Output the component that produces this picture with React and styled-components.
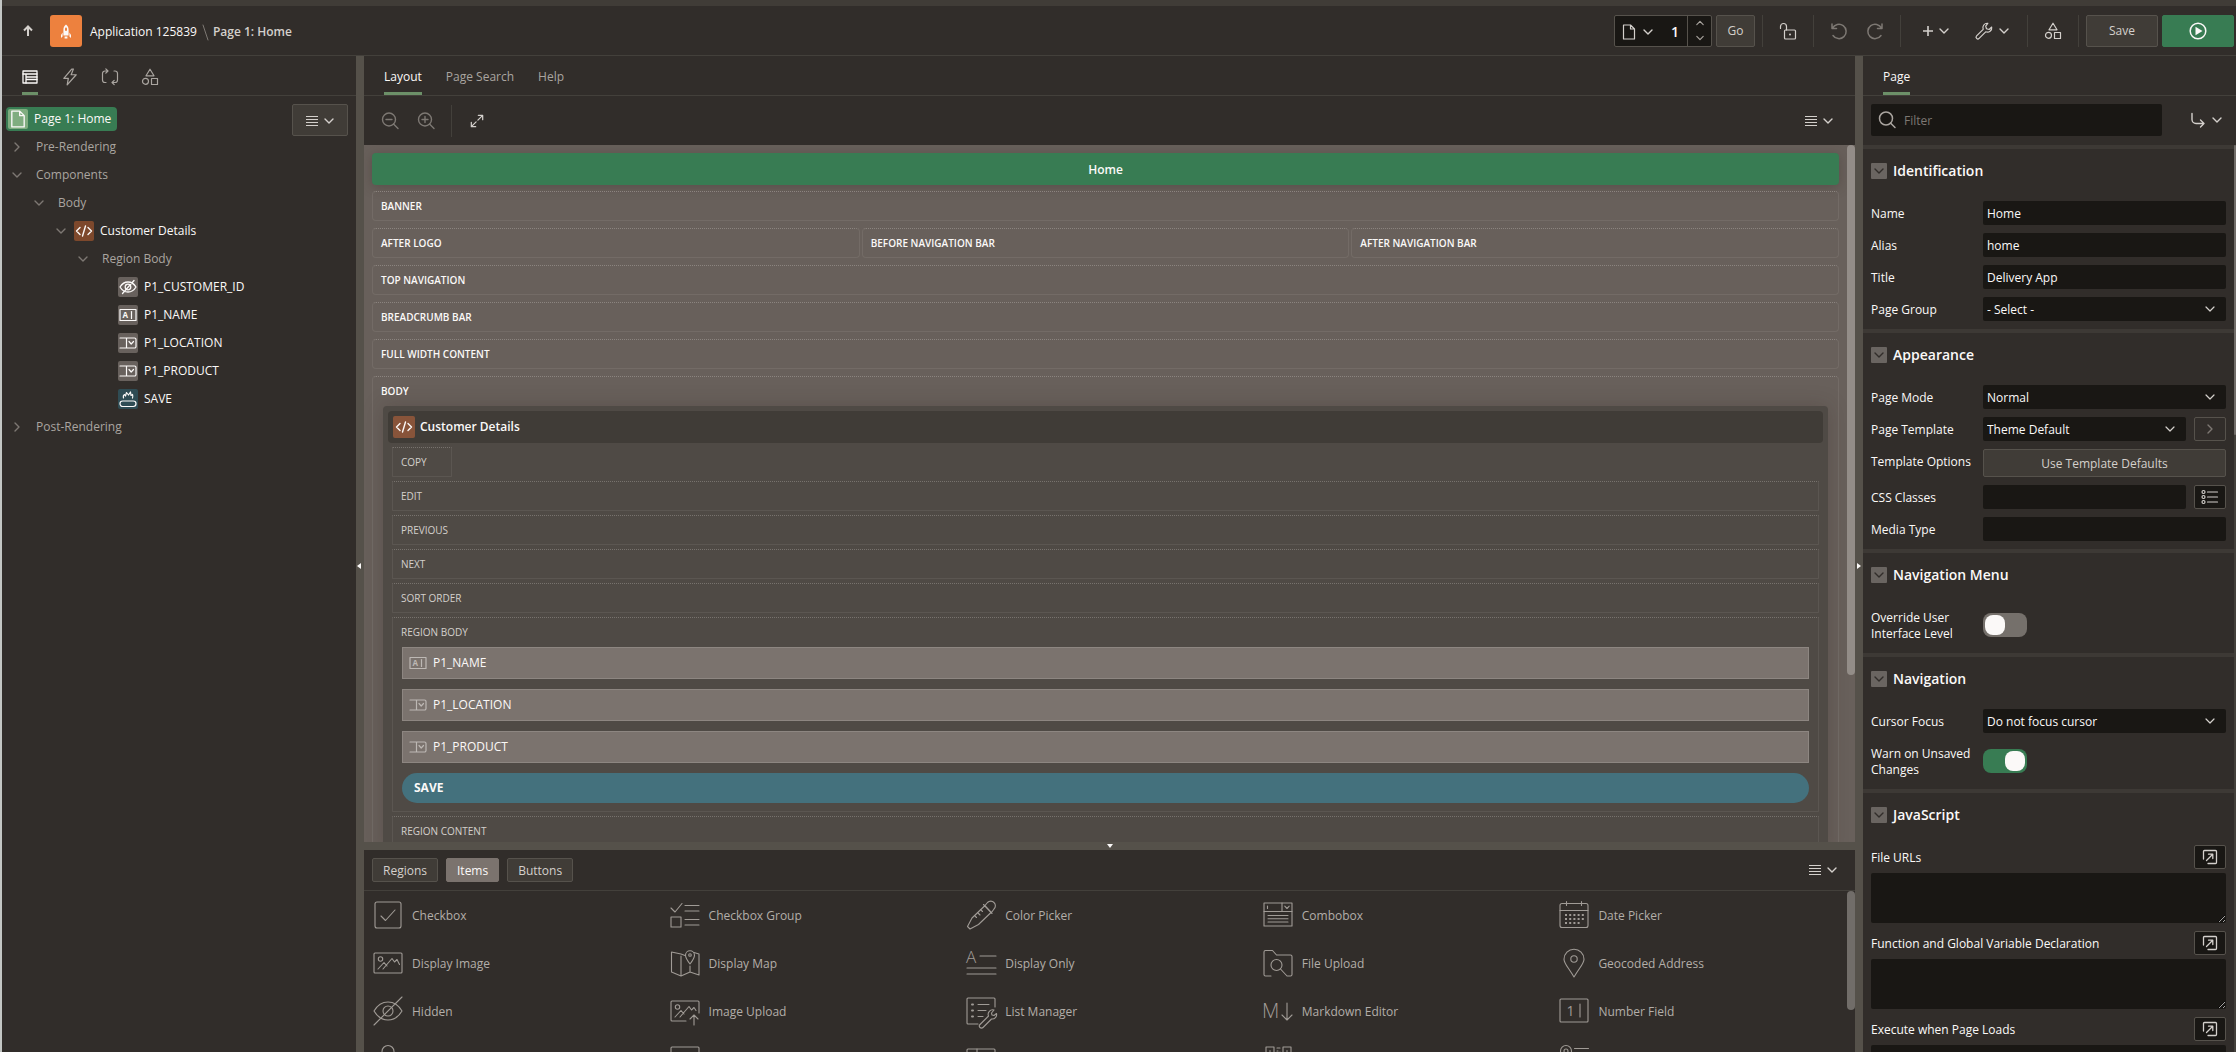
import React, { useState } from 'react'
import styled, { createGlobalStyle } from 'styled-components'

const colours = {
    panel: '#312d2a',
    chrome: '#403c37',
    line: '#43403b',
    splitter: '#55514a',
    buttonBorder: '#56524c',
    field: '#191714',
    canvas: '#68605b',
    region: '#4f4a45',
    regionTitle: '#403c37',
    item: '#7b736e',
    green: '#387c53',
    accent: '#6c9068',
    teal: '#44717d',
    text: '#fbf9f8',
    soft: '#d4d0cc',
    muted: '#aaa5a0',
    dim: '#7d7873',
}

const GlobalStyle = createGlobalStyle`
    * {
        box-sizing: border-box;
    }

    body {
        margin: 0;
        background-color: ${colours.panel};
        color: ${colours.text};
        font-family: "Open Sans", "Noto Sans", sans-serif;
        font-size: 12px;
        line-height: 16px;
    }

    button, input, select, textarea {
        font: inherit;
        color: inherit;
    }

    button {
        cursor: pointer;
    }
`

/* ---------- icons ---------- */

const Glyph = styled.svg`
    display: block;
    flex: none;
    overflow: visible;
    fill: none;
    stroke: currentColor;
    stroke-linecap: round;
    stroke-linejoin: round;
    stroke-width: ${props => props.$stroke || 1};

    text {
        fill: currentColor;
        stroke: none;
        font-family: "Open Sans", sans-serif;
    }

    .solid {
        fill: currentColor;
        stroke: none;
    }
`

const Icon = ({ size = 16, box = size, stroke, children }) => (
    <Glyph width={size} height={size} viewBox={`0 0 ${box} ${box}`} $stroke={stroke} aria-hidden="true">
        {children}
    </Glyph>
)

const ChevronDown = ({ size = 10, stroke = 1.4 }) => (
    <Icon size={size} box={10} stroke={stroke}><path d="M1 3l4 4 4-4" /></Icon>
)

const ChevronRight = ({ size = 10, stroke = 1.4 }) => (
    <Icon size={size} box={10} stroke={stroke}><path d="M3 1l4 4-4 4" /></Icon>
)

const MenuIcon = () => (
    <Icon size={12} stroke={1.1}><path d="M0 1.5h12M0 4.5h12M0 7.500h12M0 10.500h12" strokeLinecap="butt" /></Icon>
)

const ArrowUpIcon = () => (
    <Icon size={12} stroke={2}><path d="M6 11V2M2 5.500l4-4 4 4" strokeLinecap="butt" strokeLinejoin="miter" /></Icon>
)

const RocketIcon = () => (
    <Icon size={16}>
        <path className="solid" d="M8 1.500c-2 1.400-2.600 3.400-2.600 5.500v5.500h5.200V7c0-2.100-.600-4.100-2.600-5.500zM4.600 9.500L3 12v3l1.600-1.500zM11.400 9.500L13 12v3l-1.600-1.500zM6.600 13.500h2.800v2H6.600z" />
        <rect x="7" y="4.500" width="2" height="3.500" rx="1" fill="#ed813e" stroke="none" />
    </Icon>
)

const SlashIcon = () => (
    <Icon size={16}><path d="M6 1l5 15" /></Icon>
)

const RenderingIcon = () => (
    <Icon size={16} stroke={1.3}>
        <rect x="1" y="2" width="14" height="12" />
        <path d="M1 5h14M4 5v9M4 8h11M4 10.500h11" />
    </Icon>
)

const BoltIcon = () => (
    <Icon size={18} box={16} stroke={1.1}><path d="M9.500 1L2.500 9.200h4L5.500 15l8-9h-4.500l2-5z" /></Icon>
)

const ProcessIcon = () => (
    <Icon size={18} stroke={1.2}>
        <path d="M7 3H4a2.500 2.500 0 0 0-2.500 2.500V12A2.500 2.500 0 0 0 4 14.500h1M4.800.800L7 3 4.800 5.200M11 14.500h3a2.500 2.500 0 0 0 2.500-2.500V5.500A2.500 2.500 0 0 0 14 3h-1M13.200 12.300L11 14.500l2.200 2.200" />
    </Icon>
)

const ShapesIcon = () => (
    <Icon size={18} stroke={1.2}>
        <path d="M9 1.200l4 6.600H5z" />
        <circle cx="4.500" cy="13.300" r="3" />
        <rect x="10.500" y="10.500" width="6" height="6" />
    </Icon>
)

const PageIcon = ({ size = 16 }) => (
    <Icon size={size} box={16} stroke={1.2}>
        <path d="M2.500 1h7l4 4v10h-11zM9.500 1v4h4" />
    </Icon>
)

const UnlockIcon = () => (
    <Icon size={18} stroke={1.2}>
        <rect x="5.500" y="8" width="11" height="9" rx="1" />
        <path d="M1.500 6.500V4.500a3 3 0 0 1 6 0V8" />
        <circle className="solid" cx="11" cy="12.500" r="1" />
    </Icon>
)

const UndoIcon = () => (
    <Icon size={18} stroke={1.5}>
        <path d="M2 2v4.500h4.500M2.500 6.200A7.200 7.200 0 1 1 3 13.500" />
    </Icon>
)

const RedoIcon = () => (
    <Icon size={18} stroke={1.5}>
        <path d="M16 2v4.500h-4.500M15.500 6.200A7.200 7.200 0 1 0 15 13.500" />
    </Icon>
)

const PlusIcon = () => (
    <Icon size={10} stroke={1.6}><path d="M5 0v10M0 5h10" strokeLinecap="butt" /></Icon>
)

const WrenchIcon = () => (
    <Icon size={18} stroke={1.2}>
        <path d="M12.800 1.300a4.400 4.400 0 0 0-4.600 6L1.600 13.900a1.700 1.700 0 0 0 2.500 2.500l6.600-6.600a4.400 4.400 0 0 0 6-4.800l-2.600 2.500-2.600-.800-.800-2.600z" />
    </Icon>
)

const RunIcon = () => (
    <Icon size={18} stroke={1.5}>
        <circle cx="9" cy="9" r="7.800" />
        <path className="solid" d="M6.500 4.800v8.400L13.500 9z" />
    </Icon>
)

const ZoomOutIcon = () => (
    <Icon size={18} stroke={1.4}>
        <circle cx="8" cy="7.500" r="6.500" /><path d="M12.500 12l4.500 4.500M5 7.500h6" />
    </Icon>
)

const ZoomInIcon = () => (
    <Icon size={18} stroke={1.4}>
        <circle cx="8" cy="7.500" r="6.500" /><path d="M12.500 12l4.500 4.500M5 7.500h6M8 4.500v6" />
    </Icon>
)

const ExpandIcon = () => (
    <Icon size={14} box={16} stroke={1.4}>
        <path d="M9.500 1.500h5v5M14.500 1.500L9 7M6.500 14.500h-5v-5M1.500 14.500L7 9" />
    </Icon>
)

const SearchIcon = () => (
    <Icon size={18} stroke={1.5}>
        <circle cx="8" cy="7.500" r="6.500" /><path d="M12.500 12l4.500 4.500" />
    </Icon>
)

const GotoIcon = () => (
    <Icon size={16} stroke={1.4}>
        <path d="M2 1.500v6a4 4 0 0 0 4 4h8M10.500 8l3.500 3.500-3.500 3.500" />
    </Icon>
)

const CodeIcon = () => (
    <Icon size={18} stroke={1.4}>
        <path d="M5 5.500L1.500 9 5 12.500M13 5.500L16.500 9 13 12.500M10.500 4l-3 10" />
    </Icon>
)

const HiddenIcon = () => (
    <Icon size={18} stroke={1.3}>
        <path d="M1 9c2-3.300 4.800-5 8-5s6 1.700 8 5c-2 3.300-4.800 5-8 5s-6-1.700-8-5zM15 2.500L3.500 15.500" />
        <circle cx="9" cy="9" r="2.800" />
    </Icon>
)

const TextFieldIcon = () => (
    <Icon size={18} stroke={1.2}>
        <rect x="1" y="3.500" width="16" height="11" />
        <text x="3.500" y="12" fontSize="8" fontWeight="700">A</text>
        <path d="M12.500 5.500v7" />
    </Icon>
)

const SelectListIcon = () => (
    <Icon size={18} stroke={1.2}>
        <path d="M1 4h14.500a1.500 1.500 0 0 1 1.500 1.500v7a1.500 1.500 0 0 1-1.500 1.500H1M7.500 4v10M10 7.500l2.200 2.500 2.300-2.500" />
    </Icon>
)

const ButtonIcon = () => (
    <Icon size={18} stroke={1.2}>
        <rect x="1" y="11" width="16" height="5.500" rx="2.700" />
        <path d="M4.500 8c-.500-2 0-3 1-3.500L6.500 6l1-3.500L9.500 5l2-3 .500 3.500 1.500-1c.500 1.500.500 2.500 0 3.500" />
    </Icon>
)

const ListIcon = () => (
    <Icon size={18} stroke={1.2}>
        <circle cx="2.500" cy="4" r="1.500" /><circle cx="2.500" cy="9" r="1.500" /><circle cx="2.500" cy="14" r="1.500" />
        <path d="M6.500 4h10M6.500 9h10M6.500 14h10" />
    </Icon>
)

const PopupIcon = () => (
    <Icon size={16} stroke={1.3}>
        <path d="M1.500 10V2.500a1 1 0 0 1 1-1h11a1 1 0 0 1 1 1v11a1 1 0 0 1-1 1H6M4.500 11.500l6-6M6.500 5.200h4.300v4.300" />
    </Icon>
)

/* Item gallery drawings, all on a 32 unit grid */
const drawings = {
    checkbox: <><rect x="3" y="3" width="26" height="26" rx="2" /><path d="M9 17l4.500 4.500L23 11" /></>,
    checkboxGroup: <><path d="M2 9l4 4 7-8.500M16 6.500h14M16 12h14M16 20.500h14M16 26h14" /><rect x="2" y="18" width="10" height="10" /></>,
    colorPicker: <>
        <path d="M20 6.500l2.500-3a4.500 4.500 0 0 1 6.500 0 4.500 4.500 0 0 1 0 6.500l-2.500 3.500zM18.500 5.500l8.500 9M19 7.500L7 19 2.500 27.500 5 30l8.500-4.500L25.500 14" />
        <path d="M15.500 10.500l2 2M12.500 13.500l2.500 2.500M9.500 16.500l2 2" />
    </>,
    combobox: <>
        <rect x="2" y="4" width="28" height="23" />
        <path d="M2 12.500h28M20 4v8.500M22.800 7.200l2.200 2.300 2.200-2.300M5.500 7v2.500M6 16.500h20M6 19.800h20M6 23h20" />
    </>,
    datePicker: <>
        <rect x="2" y="4.500" width="28" height="24" rx="2" />
        <path d="M2 11.500h28M8.500 2.500v4M23.500 2.500v4" />
        <path d="M7 16h19M7 20h19M7 24h15" strokeDasharray="2 2.200" strokeWidth="2" strokeLinecap="butt" />
    </>,
    displayImage: <>
        <rect x="2" y="6" width="28" height="20" rx="1" /><circle cx="8.500" cy="12" r="2.200" />
        <path d="M6 22l6-6.500 3 3.500M11 22l9-10.500 2.500 3.500 2.500-2.500 2.500 5" />
    </>,
    displayMap: <>
        <path d="M16 8.500l-4-1.500-9.500-2v20l9.500 4 9-4 9 3V7l-5-1.500M12 9v20M21 19v6" />
        <path d="M21 17c-3-4-4.500-6-4.500-8.800a4.500 4.500 0 0 1 9 0C25.500 11 24 13 21 17z" /><circle cx="21" cy="8" r="1.300" />
    </>,
    displayOnly: <><text x="1" y="15.500" fontSize="17" fontWeight="300">A</text><path d="M15 9h16M2 21h29M2 27h29" /></>,
    fileUpload: <>
        <path d="M9 29H3.500A1.500 1.500 0 0 1 2 27.500V5a1.500 1.500 0 0 1 1.500-1.500h7l4 4.500H28.500A1.500 1.500 0 0 1 30 9.500v18a1.500 1.500 0 0 1-1.500 1.500H25l-6.500-7" />
        <circle cx="14.500" cy="18" r="5.500" />
    </>,
    geocodedAddress: <>
        <path d="M16 30C10 20 6 16.500 6 12.200a10 10 0 0 1 20 0C26 16.500 22 20 16 30z" /><circle cx="16" cy="12" r="3.200" />
    </>,
    hidden: <>
        <path d="M2 16c3.500-6 8.500-9 14-9s10.500 3 14 9c-3.500 6-8.500 9-14 9S5.500 22 2 16zM30 2L2 30" /><circle cx="16" cy="16" r="5" />
    </>,
    imageUpload: <>
        <path d="M17 26H3a1 1 0 0 1-1-1V7a1 1 0 0 1 1-1h26a1 1 0 0 1 1 1v11M6 22l6-6.500 3 3.500M11 22l9-10.500 2.500 3.500 2.500-2.500 2 3" />
        <circle cx="8.500" cy="12" r="2.200" /><path d="M25 30V20M21 24l4-4 4 4" />
    </>,
    listManager: <>
        <path d="M13 29H3a1 1 0 0 1-1-1V4a1 1 0 0 1 1-1h26a1 1 0 0 1 1 1v8" />
        <path d="M13 9.500h11M13 15.500h8M13 21.500h5" /><path d="M7 9.500h1M7 15.500h1M7 21.500h1" strokeWidth="2" />
        <path d="M29 15a4.500 4.500 0 0 0-5.500 6L15 29.500a2 2 0 0 0 3 3l8.500-8.500a4.500 4.500 0 0 0 5-5.500l-2.500 2-2-.500-.500-2z" />
    </>,
    markdown: <><text x="0" y="23" fontSize="20" fontWeight="300">M</text><path d="M25 8v17M20 20l5 5 5-5" /></>,
    numberField: <>
        <rect x="2" y="4" width="28" height="23" rx="1" /><text x="8.500" y="20.500" fontSize="14">1</text><path d="M22 9v13" />
    </>,
    password: <><path d="M10 16V8.500a6 6 0 0 1 12 0V16" /><rect x="6" y="16" width="20" height="13" /></>,
    percentGraph: <><rect x="2" y="4" width="28" height="24" rx="1" /><path d="M6 16h20" /></>,
    popupLov: <><rect x="2" y="6" width="28" height="9" rx="1" /><path d="M12 6v9" /></>,
    qrCode: <>
        <rect x="4" y="4" width="8" height="8" /><rect x="21" y="4" width="8" height="8" />
        <path d="M7.500 8h1M24.500 8h1M15 5h3M15 8h1M18 9v2M4 16h8M16 15v10M21 18h8" />
    </>,
    radioGroup: <><circle cx="8" cy="8" r="5.500" /><circle cx="8" cy="8" r="2" /><path d="M16.500 5.500h14M16.500 11h14" /></>,
}

const GalleryIcon = ({ name }) => <Icon size={32} stroke={1.1}>{drawings[name]}</Icon>

/* ---------- shell ---------- */

const Shell = styled.div`
    height: 100vh;
    display: flex;
    flex-direction: column;
    overflow: hidden;
    border-left: 2px solid #c3c6c4;
    background-color: ${colours.panel};
`

const TopStrip = styled.div`
    flex: none;
    height: 6px;
    background-color: ${colours.chrome};
`

const Header = styled.header`
    flex: none;
    display: flex;
    align-items: center;
    justify-content: space-between;
    height: 50px;
    padding: 0 2px 0 10px;
    border-bottom: 1px solid ${colours.line};
`

const HeaderGroup = styled.div`
    display: flex;
    align-items: center;
`

const IconButton = styled.button`
    display: flex;
    align-items: center;
    justify-content: center;
    gap: 6px;
    width: ${props => props.$width || 36}px;
    height: 32px;
    padding: 0;
    border: none;
    background: none;
    color: ${props => (props.$dim ? colours.dim : colours.soft)};
`

const AppBadge = styled.span`
    display: flex;
    align-items: center;
    justify-content: center;
    width: 32px;
    height: 32px;
    margin: 0 8px 0 6px;
    border-radius: 3px;
    background-color: #ed813e;
`

const Crumbs = styled.nav`
    display: flex;
    align-items: center;
    padding-top: 2px;
    color: ${colours.dim};
`

const Crumb = styled.a`
    color: ${colours.text};
    text-decoration: none;
`

const CurrentCrumb = styled.span`
    font-weight: 600;
    color: ${colours.soft};
`

const Divider = styled.span`
    width: 1px;
    height: 32px;
    margin: 0 7px;
    background-color: ${colours.line};
`

const Button = styled.button`
    height: ${props => props.$height || 32}px;
    min-width: ${props => props.$width || 0}px;
    padding: 1px ${props => props.$pad || 0}px 0;
    display: flex;
    align-items: center;
    justify-content: center;
    gap: 6px;
    border: 1px solid ${colours.buttonBorder};
    border-radius: 2px;
    background-color: ${colours.chrome};
    color: ${colours.soft};
`

const RunButton = styled(Button)`
    margin-left: 4px;
    padding: 0;
    border-color: ${colours.green};
    background-color: ${colours.green};
    color: ${colours.text};
`

const PageSelector = styled.div`
    display: flex;
    width: 98px;
    height: 32px;
    margin-right: 4px;
    border: 1px solid ${colours.buttonBorder};
    border-radius: 2px;
    background-color: ${colours.field};
`

const PageNumber = styled.input`
    width: 28px;
    padding: 2px 8px 0 0;
    border: none;
    background: none;
    text-align: right;
    font-weight: 600;
    font-size: 14px;
`

const Stepper = styled.div`
    flex: 1;
    display: flex;
    flex-direction: column;
    border-left: 1px solid ${colours.buttonBorder};
`

const StepButton = styled.button`
    flex: 1;
    display: flex;
    align-items: center;
    justify-content: center;
    padding: 0;
    border: none;
    background: none;
    color: ${colours.muted};

    svg {
        transform: ${props => (props.$up ? 'rotate(180deg)' : 'none')};
    }
`

const Workspace = styled.div`
    flex: 1;
    min-height: 0;
    display: grid;
    grid-template-columns: 354px 8px minmax(0, 1fr) 8px 373px;
`

const Pane = styled.section`
    min-width: 0;
    min-height: 0;
    display: flex;
    flex-direction: column;
    overflow: hidden;
`

const Splitter = styled.div`
    flex: none;
    display: flex;
    align-items: center;
    justify-content: center;
    min-height: 8px;
    padding-top: ${props => (props.$vertical ? 24 : 0)}px;
    background-color: ${colours.splitter};
    color: ${colours.text};
`

const Handle = ({ d }) => <Icon size={8}><path className="solid" d={d} /></Icon>

const TabBar = styled.nav`
    flex: none;
    display: flex;
    gap: 24px;
    height: 40px;
    padding: 0 20px;
    border-bottom: 1px solid ${colours.line};
`

const Tab = styled.button`
    display: flex;
    align-items: center;
    justify-content: center;
    padding: 5px 0 0;
    border: none;
    border-bottom: 3px solid ${props => (props.$active ? colours.accent : 'transparent')};
    background: none;
    color: ${props => (props.$active ? colours.text : colours.muted)};
`

const IconTab = styled(Tab)`
    width: 16px;
`

/* ---------- page tree ---------- */

const TreeArea = styled.div`
    display: flex;
    align-items: flex-start;
    justify-content: space-between;
    padding: 8px 8px 8px 4px;
`

const Tree = styled.ul`
    list-style: none;
    margin: 0;
    padding: 1px 0 0;
`

const TreeRow = styled.li`
    display: flex;
    align-items: center;
    height: 28px;
    padding-left: ${props => props.$level * 22}px;
    color: ${props => (props.$strong ? colours.text : colours.muted)};
`

const Twisty = styled.span`
    display: flex;
    justify-content: center;
    width: 22px;
    color: ${colours.dim};
`

const TypeBadge = styled.span`
    display: flex;
    align-items: center;
    justify-content: center;
    width: ${props => props.$size || 20}px;
    height: ${props => props.$size || 20}px;
    margin-left: 2px;
    border-radius: 2px;
    background-color: ${props => props.$colour};
    color: ${colours.text};
`

const TreeLabel = styled.span`
    margin-left: ${props => (props.$badge ? 6 : 8)}px;
`

const PageNode = styled.span`
    display: flex;
    align-items: center;
    height: 24px;
    padding-right: 6px;
    border-radius: 4px;
    background-color: ${colours.green};
    color: ${colours.text};
`

/* ---------- layout canvas ---------- */

const Toolbar = styled.div`
    flex: none;
    display: flex;
    align-items: center;
    justify-content: space-between;
    height: ${props => props.$height || 49}px;
    padding: 0 ${props => props.$right || 8}px 0 8px;
`

const Scroller = styled.div`
    flex: 1;
    min-height: 0;
    display: flex;
    overflow: hidden;
    background-color: ${props => props.$colour || colours.panel};
`

const Track = styled.div`
    flex: none;
    width: 8px;
`

const Thumb = styled.div`
    height: ${props => props.$length}%;
    border-radius: 4px;
    background-color: ${props => props.$colour || '#716d69'};
`

const Canvas = styled.div`
    flex: 1;
    min-width: 0;
    display: flex;
    flex-direction: column;
    gap: 7px;
    padding: 8px;
`

const PageTitle = styled.div`
    flex: none;
    display: flex;
    align-items: center;
    justify-content: center;
    height: 32px;
    margin-bottom: -1px;
    padding-top: 2px;
    border-radius: 4px;
    background-color: ${colours.green};
    box-shadow: 0 2px 12px rgba(60, 45, 40, 0.35);
    font-weight: 600;
`

const Slot = styled.div`
    flex: none;
    min-height: 30px;
    border: 1px solid ${props => (props.$inner ? '#5b5651' : '#736b66')};
    border-top: 1px dotted ${props => (props.$inner ? '#77726d' : '#8b847f')};
    border-radius: ${props => (props.$inner ? 1 : 4)}px;
    width: ${props => (props.$narrow ? '60px' : 'auto')};
    color: ${props => (props.$inner ? colours.soft : colours.text)};
    font-size: 10px;
    font-weight: ${props => (props.$inner ? 400 : 600)};
`

const SlotLabel = styled.div`
    padding: 6px 8px;
`

const SlotRow = styled.div`
    flex: none;
    display: grid;
    grid-template-columns: repeat(3, minmax(0, 1fr));
    gap: 2px;
`

const Region = styled.div`
    margin: 1px 10px 0;
    padding: 5px;
    border-radius: 4px;
    background-color: ${colours.region};
    box-shadow: 0 0 20px rgba(50, 35, 30, 0.25);
`

const RegionTitle = styled.div`
    display: flex;
    align-items: center;
    gap: 5px;
    height: 32px;
    padding: 0 3px;
    border-radius: 4px;
    background-color: ${colours.regionTitle};
    font-size: 12px;
    font-weight: 600;
    color: ${colours.text};
`

const RegionSlots = styled.div`
    display: flex;
    flex-direction: column;
    gap: 4px;
    padding: 4px;
`

const RegionItems = styled.div`
    display: flex;
    flex-direction: column;
    gap: 10px;
    padding: 1px 9px 8px;
`

const PageItem = styled.div`
    display: flex;
    align-items: center;
    gap: 6px;
    height: 32px;
    padding: 0 6px;
    border: 1px solid #8d8681;
    background-color: ${colours.item};
    color: ${colours.text};
    font-size: 12px;

    svg {
        color: #bdb8b4;
    }
`

const PageButton = styled.div`
    display: flex;
    align-items: center;
    height: 30px;
    padding: 0 12px;
    border-radius: 15px;
    background-color: ${colours.teal};
    color: ${colours.text};
    font-size: 12px;
    font-weight: 700;
`

/* ---------- gallery ---------- */

const GalleryPane = styled.div`
    flex: none;
    height: 202px;
    display: flex;
    flex-direction: column;
    overflow: hidden;
`

const GalleryBar = styled(Toolbar)`
    border-bottom: 1px solid ${colours.line};
`

const GalleryTabs = styled.div`
    display: flex;
    gap: 8px;
`

const GalleryTab = styled(Button)`
    ${props => props.$active && `
        border-color: ${colours.item};
        background-color: ${colours.item};
        color: ${colours.text};
    `}
`

const GalleryGrid = styled.div`
    flex: 1;
    display: grid;
    grid-template-columns: repeat(5, minmax(0, 1fr));
    grid-auto-rows: 48px;
`

const GalleryItem = styled.div`
    display: flex;
    align-items: center;
    gap: 8px;
    padding: 0 8px;
    color: #a09b96;
`

const GalleryLabel = styled.span`
    padding-top: 1px;
    color: #b3aea9;
`

/* ---------- property editor ---------- */

const FilterBar = styled.div`
    flex: none;
    display: flex;
    justify-content: space-between;
    padding: 8px 8px 9px;
`

const FilterBox = styled.label`
    display: flex;
    align-items: center;
    gap: 8px;
    width: 291px;
    height: 32px;
    padding: 0 7px;
    border-radius: 2px;
    background-color: ${colours.field};
    color: ${colours.muted};
`

const FilterInput = styled.input`
    flex: 1;
    min-width: 0;
    padding: 1px 0 0;
    border: none;
    background: none;

    &::placeholder {
        color: ${colours.dim};
        opacity: 1;
    }
`

const Properties = styled.div`
    flex: 1;
    min-width: 0;
`

const EdgeTrack = styled(Track)`
    width: 2px;
    background-color: ${colours.line};
`

const Group = styled.section`
    padding-bottom: 4px;
    border-top: 4px solid #3d3935;
`

const GroupHeader = styled.h3`
    display: flex;
    align-items: center;
    gap: 6px;
    height: 48px;
    margin: 0;
    padding: 0 8px 4px;
    font-size: 14px;
    font-weight: 600;
`

const Collapse = styled.button`
    display: flex;
    align-items: center;
    justify-content: center;
    width: 16px;
    height: 16px;
    padding: 0;
    border: none;
    border-radius: 1px;
    background-color: #6a6561;
    color: ${colours.panel};
`

const Property = styled.div`
    display: grid;
    grid-template-columns: 112px minmax(0, 1fr);
    padding: 0 8px;
`

const PropertyLabel = styled.label`
    padding: 9px 8px 7px 0;
`

const Control = styled.div`
    display: flex;
    align-items: center;
    gap: 8px;
    padding: 4px 0;
`

const TextInput = styled.input`
    flex: 1;
    min-width: 0;
    height: 24px;
    padding: 1px 4px 0;
    border: none;
    border-radius: 2px;
    background-color: ${colours.field};
`

const SelectBox = styled.div`
    position: relative;
    flex: 1;
    min-width: 0;

    svg {
        position: absolute;
        top: 7px;
        right: 11px;
        color: ${colours.soft};
        pointer-events: none;
    }
`

const SelectInput = styled.select`
    display: block;
    appearance: none;
    width: 100%;
    height: 24px;
    padding: 1px 24px 0 4px;
    border: none;
    border-radius: 2px;
    background-color: ${colours.field};
`

const SideButton = styled.button`
    flex: none;
    display: flex;
    align-items: center;
    justify-content: center;
    width: 32px;
    height: 24px;
    padding: 0;
    border: 1px solid ${colours.buttonBorder};
    border-radius: 2px;
    background-color: ${props => (props.$plain ? 'transparent' : colours.field)};
    color: ${props => (props.$plain ? colours.dim : colours.soft)};
`

const WideButton = styled(Button)`
    flex: 1;
`

const Toggle = styled.input`
    appearance: none;
    flex: none;
    display: flex;
    align-items: center;
    width: 44px;
    height: 24px;
    margin: 0;
    padding: 2px;
    border-radius: 8px;
    background-color: #75706b;

    &::before {
        content: '';
        width: 20px;
        height: 20px;
        border-radius: 8px;
        background-color: ${colours.text};
    }

    &:checked {
        justify-content: flex-end;
        background-color: ${colours.green};
    }
`

const CodeProperty = styled.div`
    padding: 4px 8px;
`

const CodeHead = styled.div`
    display: flex;
    align-items: center;
    justify-content: space-between;
    margin-bottom: 4px;
`

const CodeLabel = styled.label`
    padding-top: 1px;
`

const CodeArea = styled.textarea`
    display: block;
    width: 100%;
    height: 50px;
    padding: 4px;
    border: none;
    border-radius: 2px;
    background-color: ${colours.field};
    color-scheme: dark;
    resize: vertical;
`

/* ---------- data ---------- */

const tree = [
    { label: 'Pre-Rendering', level: 0, state: 'closed' },
    { label: 'Components', level: 0, state: 'open' },
    { label: 'Body', level: 1, state: 'open' },
    { label: 'Customer Details', level: 2, state: 'open', icon: <CodeIcon />, colour: '#7d482c' },
    { label: 'Region Body', level: 3, state: 'open' },
    { label: 'P1_CUSTOMER_ID', level: 4, icon: <HiddenIcon />, colour: '#68615d' },
    { label: 'P1_NAME', level: 4, icon: <TextFieldIcon />, colour: '#68615d' },
    { label: 'P1_LOCATION', level: 4, icon: <SelectListIcon />, colour: '#68615d' },
    { label: 'P1_PRODUCT', level: 4, icon: <SelectListIcon />, colour: '#68615d' },
    { label: 'SAVE', level: 4, icon: <ButtonIcon />, colour: '#2f4c54' },
    { label: 'Post-Rendering', level: 0, state: 'closed' },
]

const gallery = [
    ['checkbox', 'Checkbox'],
    ['checkboxGroup', 'Checkbox Group'],
    ['colorPicker', 'Color Picker'],
    ['combobox', 'Combobox'],
    ['datePicker', 'Date Picker'],
    ['displayImage', 'Display Image'],
    ['displayMap', 'Display Map'],
    ['displayOnly', 'Display Only'],
    ['fileUpload', 'File Upload'],
    ['geocodedAddress', 'Geocoded Address'],
    ['hidden', 'Hidden'],
    ['imageUpload', 'Image Upload'],
    ['listManager', 'List Manager'],
    ['markdown', 'Markdown Editor'],
    ['numberField', 'Number Field'],
    ['password'],
    ['percentGraph'],
    ['popupLov'],
    ['qrCode'],
    ['radioGroup'],
]

/* ---------- parts ---------- */

function PageHeader() {
    return (
        <Header>
            <HeaderGroup>
                <IconButton $width={32} aria-label="Up"><ArrowUpIcon /></IconButton>
                <AppBadge><RocketIcon /></AppBadge>
                <Crumbs>
                    <Crumb href="#application">Application 125839</Crumb>
                    <SlashIcon />
                    <CurrentCrumb>Page 1: Home</CurrentCrumb>
                </Crumbs>
            </HeaderGroup>
            <HeaderGroup>
                <PageSelector>
                    <IconButton $width={44} aria-label="Pages"><PageIcon /><ChevronDown /></IconButton>
                    <PageNumber aria-label="Page number" defaultValue="1" />
                    <Stepper>
                        <StepButton $up aria-label="Next page"><ChevronDown size={8} /></StepButton>
                        <StepButton aria-label="Previous page"><ChevronDown size={8} /></StepButton>
                    </Stepper>
                </PageSelector>
                <Button $width={39}>Go</Button>
                <Divider />
                <IconButton aria-label="Page unlocked"><UnlockIcon /></IconButton>
                <Divider />
                <IconButton $dim aria-label="Undo"><UndoIcon /></IconButton>
                <IconButton $dim aria-label="Redo"><RedoIcon /></IconButton>
                <Divider />
                <IconButton $width={56} aria-label="Create"><PlusIcon /><ChevronDown /></IconButton>
                <IconButton $width={56} aria-label="Utilities"><WrenchIcon /><ChevronDown /></IconButton>
                <Divider />
                <IconButton aria-label="Shared components"><ShapesIcon /></IconButton>
                <Divider />
                <Button $width={72}>Save</Button>
                <RunButton $width={72} aria-label="Save and run page"><RunIcon /></RunButton>
            </HeaderGroup>
        </Header>
    )
}

function TreePane() {
    return (
        <Pane>
            <TabBar>
                <IconTab $active aria-label="Rendering"><RenderingIcon /></IconTab>
                <IconTab aria-label="Dynamic actions"><BoltIcon /></IconTab>
                <IconTab aria-label="Processing"><ProcessIcon /></IconTab>
                <IconTab aria-label="Shared components"><ShapesIcon /></IconTab>
            </TabBar>
            <TreeArea>
                <Tree>
                    <TreeRow $level={0}>
                        <PageNode>
                            <TypeBadge $colour="#80ad80"><PageIcon size={18} /></TypeBadge>
                            <TreeLabel $badge>Page 1: Home</TreeLabel>
                        </PageNode>
                    </TreeRow>
                    {tree.map(node => (
                        <TreeRow key={node.label} $level={node.level} $strong={!!node.icon}>
                            <Twisty>
                                {node.state === 'open' && <ChevronDown />}
                                {node.state === 'closed' && <ChevronRight />}
                            </Twisty>
                            {node.icon && <TypeBadge $colour={node.colour}>{node.icon}</TypeBadge>}
                            <TreeLabel $badge={!!node.icon}>{node.label}</TreeLabel>
                        </TreeRow>
                    ))}
                </Tree>
                <Button $width={56} aria-label="Tree menu"><MenuIcon /><ChevronDown /></Button>
            </TreeArea>
        </Pane>
    )
}

function LayoutCanvas() {
    return (
        <Scroller $colour={colours.canvas}>
            <Canvas>
                <PageTitle>Home</PageTitle>
                <Slot><SlotLabel>BANNER</SlotLabel></Slot>
                <SlotRow>
                    <Slot><SlotLabel>AFTER LOGO</SlotLabel></Slot>
                    <Slot><SlotLabel>BEFORE NAVIGATION BAR</SlotLabel></Slot>
                    <Slot><SlotLabel>AFTER NAVIGATION BAR</SlotLabel></Slot>
                </SlotRow>
                <Slot><SlotLabel>TOP NAVIGATION</SlotLabel></Slot>
                <Slot><SlotLabel>BREADCRUMB BAR</SlotLabel></Slot>
                <Slot><SlotLabel>FULL WIDTH CONTENT</SlotLabel></Slot>
                <Slot>
                    <SlotLabel>BODY</SlotLabel>
                    <Region>
                        <RegionTitle>
                            <TypeBadge $size={22} $colour="#88543a"><CodeIcon /></TypeBadge>
                            Customer Details
                        </RegionTitle>
                        <RegionSlots>
                            <Slot $inner $narrow><SlotLabel>COPY</SlotLabel></Slot>
                            <Slot $inner><SlotLabel>EDIT</SlotLabel></Slot>
                            <Slot $inner><SlotLabel>PREVIOUS</SlotLabel></Slot>
                            <Slot $inner><SlotLabel>NEXT</SlotLabel></Slot>
                            <Slot $inner><SlotLabel>SORT ORDER</SlotLabel></Slot>
                            <Slot $inner>
                                <SlotLabel>REGION BODY</SlotLabel>
                                <RegionItems>
                                    <PageItem><TextFieldIcon />P1_NAME</PageItem>
                                    <PageItem><SelectListIcon />P1_LOCATION</PageItem>
                                    <PageItem><SelectListIcon />P1_PRODUCT</PageItem>
                                    <PageButton>SAVE</PageButton>
                                </RegionItems>
                            </Slot>
                            <Slot $inner><SlotLabel>REGION CONTENT</SlotLabel></Slot>
                        </RegionSlots>
                    </Region>
                </Slot>
            </Canvas>
            <Track><Thumb $length={76} $colour="#938d88" /></Track>
        </Scroller>
    )
}

function Gallery() {
    const [active, setActive] = useState('Items')

    return (
        <GalleryPane>
            <GalleryBar $height={41} $right={14}>
                <GalleryTabs>
                    {['Regions', 'Items', 'Buttons'].map(name => (
                        <GalleryTab
                            key={name}
                            $height={24}
                            $pad={10}
                            $active={name === active}
                            onClick={() => setActive(name)}
                        >
                            {name}
                        </GalleryTab>
                    ))}
                </GalleryTabs>
                <IconButton aria-label="Gallery menu"><MenuIcon /><ChevronDown /></IconButton>
            </GalleryBar>
            <Scroller>
                <GalleryGrid>
                    {gallery.map(([name, label]) => (
                        <GalleryItem key={name}>
                            <GalleryIcon name={name} />
                            {label && <GalleryLabel>{label}</GalleryLabel>}
                        </GalleryItem>
                    ))}
                </GalleryGrid>
                <Track><Thumb $length={74} /></Track>
            </Scroller>
        </GalleryPane>
    )
}

function LayoutPane() {
    return (
        <Pane>
            <TabBar>
                <Tab $active>Layout</Tab>
                <Tab>Page Search</Tab>
                <Tab>Help</Tab>
            </TabBar>
            <Toolbar $right={18}>
                <HeaderGroup>
                    <IconButton $dim aria-label="Zoom out"><ZoomOutIcon /></IconButton>
                    <IconButton $dim aria-label="Zoom in"><ZoomInIcon /></IconButton>
                    <Divider />
                    <IconButton aria-label="Expand"><ExpandIcon /></IconButton>
                </HeaderGroup>
                <IconButton aria-label="Layout menu"><MenuIcon /><ChevronDown /></IconButton>
            </Toolbar>
            <LayoutCanvas />
            <Splitter><Handle d="M1 2h6L4 6z" /></Splitter>
            <Gallery />
        </Pane>
    )
}

function PropertyGroup({ title, children }) {
    return (
        <Group>
            <GroupHeader>
                <Collapse aria-label={`Collapse ${title}`}><ChevronDown /></Collapse>
                {title}
            </GroupHeader>
            {children}
        </Group>
    )
}

function Field({ id, label, children }) {
    return (
        <Property>
            <PropertyLabel htmlFor={id}>{label}</PropertyLabel>
            <Control>{children}</Control>
        </Property>
    )
}

function TextProperty({ id, label, value = '', children }) {
    return (
        <Field id={id} label={label}>
            <TextInput id={id} defaultValue={value} />
            {children}
        </Field>
    )
}

function SelectProperty({ id, label, value, children }) {
    return (
        <Field id={id} label={label}>
            <SelectBox>
                <SelectInput id={id}><option>{value}</option></SelectInput>
                <ChevronDown stroke={1.2} />
            </SelectBox>
            {children}
        </Field>
    )
}

function ToggleProperty({ id, label, on }) {
    return (
        <Field id={id} label={label}>
            <Toggle id={id} type="checkbox" role="switch" defaultChecked={on} />
        </Field>
    )
}

function CodeEditorProperty({ id, label }) {
    return (
        <CodeProperty>
            <CodeHead>
                <CodeLabel htmlFor={id}>{label}</CodeLabel>
                <SideButton aria-label={`Edit ${label}`}><PopupIcon /></SideButton>
            </CodeHead>
            <CodeArea id={id} />
        </CodeProperty>
    )
}

function PropertyPane() {
    return (
        <Pane>
            <TabBar>
                <Tab $active>Page</Tab>
            </TabBar>
            <FilterBar>
                <FilterBox>
                    <SearchIcon />
                    <FilterInput placeholder="Filter" aria-label="Filter properties" />
                </FilterBox>
                <IconButton $width={44} aria-label="Go to group"><GotoIcon /><ChevronDown /></IconButton>
            </FilterBar>
            <Scroller>
                <Properties>
                    <PropertyGroup title="Identification">
                        <TextProperty id="name" label="Name" value="Home" />
                        <TextProperty id="alias" label="Alias" value="home" />
                        <TextProperty id="title" label="Title" value="Delivery App" />
                        <SelectProperty id="page-group" label="Page Group" value="- Select -" />
                    </PropertyGroup>
                    <PropertyGroup title="Appearance">
                        <SelectProperty id="page-mode" label="Page Mode" value="Normal" />
                        <SelectProperty id="page-template" label="Page Template" value="Theme Default">
                            <SideButton $plain aria-label="Go to template"><ChevronRight /></SideButton>
                        </SelectProperty>
                        <Field id="template-options" label="Template Options">
                            <WideButton id="template-options" $height={28}>Use Template Defaults</WideButton>
                        </Field>
                        <TextProperty id="css-classes" label="CSS Classes">
                            <SideButton aria-label="Pick CSS classes"><ListIcon /></SideButton>
                        </TextProperty>
                        <TextProperty id="media-type" label="Media Type" />
                    </PropertyGroup>
                    <PropertyGroup title="Navigation Menu">
                        <ToggleProperty id="override" label="Override User Interface Level" />
                    </PropertyGroup>
                    <PropertyGroup title="Navigation">
                        <SelectProperty id="cursor-focus" label="Cursor Focus" value="Do not focus cursor" />
                        <ToggleProperty id="warn" label="Warn on Unsaved Changes" on />
                    </PropertyGroup>
                    <PropertyGroup title="JavaScript">
                        <CodeEditorProperty id="file-urls" label="File URLs" />
                        <CodeEditorProperty id="global-variables" label="Function and Global Variable Declaration" />
                        <CodeEditorProperty id="page-loads" label="Execute when Page Loads" />
                    </PropertyGroup>
                </Properties>
                <EdgeTrack><Thumb $length={32} /></EdgeTrack>
            </Scroller>
        </Pane>
    )
}

function App() {
    return (
        <>
            <GlobalStyle />
            <Shell>
                <TopStrip />
                <PageHeader />
                <Workspace>
                    <TreePane />
                    <Splitter $vertical><Handle d="M5 1v6L1 4z" /></Splitter>
                    <LayoutPane />
                    <Splitter $vertical><Handle d="M2 1v6l4-3z" /></Splitter>
                    <PropertyPane />
                </Workspace>
            </Shell>
        </>
    )
}

export default App
